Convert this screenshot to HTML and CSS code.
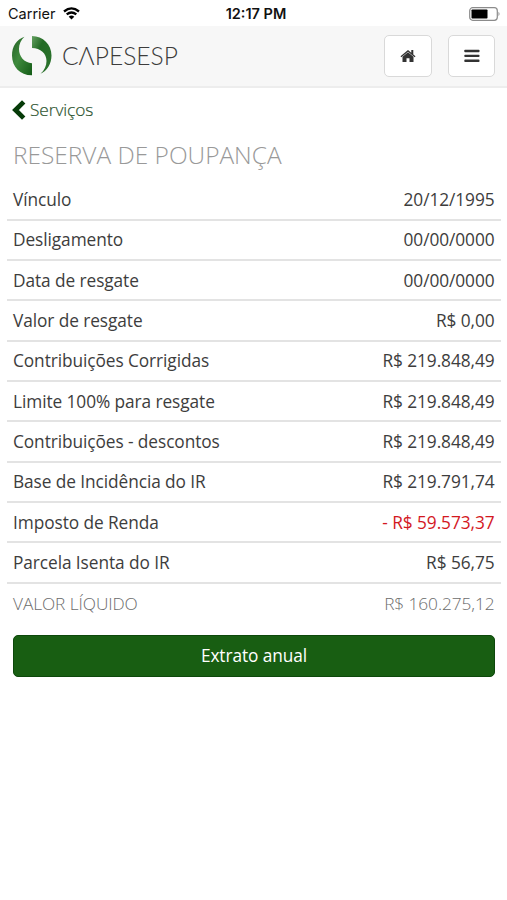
FILE: index.html
```html
<!DOCTYPE html>
<html lang="pt-BR">
<head>
<meta charset="utf-8">
<title>Reserva de Poupança</title>
<link rel="stylesheet" href="styles.css">
</head>
<body>
<div class="status">
  <div class="carrier"><span>Carrier</span>
    <svg class="wifi" width="17" height="13" viewBox="0 0 17 13" fill="none" stroke="#000" stroke-width="2.3"><path d="M1 4.5Q8.500-1.700 16 4.500M3.700 7.400Q8.500 3.500 13.300 7.400"/><path d="M8.500 12.500L5.700 9.700Q8.500 7.500 11.300 9.700Z" fill="#000" stroke="none"/></svg>
  </div>
  <div class="time">12:17 PM</div>
  <svg class="battery" width="31" height="14" viewBox="0 0 31 14"><rect x=".7" y=".7" width="27.600" height="12.600" rx="3" fill="#fff" stroke="#8b8b8b" stroke-width="1.200"/><rect x="2.500" y="2.500" width="16" height="9" rx=".8"/><path d="M29.500 4.800Q31.500 7 29.500 9.200Z" fill="#8b8b8b"/></svg>
</div>
<header class="navbar">
  <div class="brand">
    <svg class="mark" width="40" height="40" viewBox="0 0 40 40">
      <defs>
        <linearGradient id="left" x1="0" y1="0" x2="1" y2="1"><stop offset="0" stop-color="#235f25"/><stop offset=".45" stop-color="#3f8a3d"/><stop offset="1" stop-color="#135b16"/></linearGradient>
        <linearGradient id="right" x1="0" y1="0" x2="1" y2="1"><stop offset="0" stop-color="#65a061"/><stop offset=".35" stop-color="#236b25"/><stop offset="1" stop-color="#2d732e"/></linearGradient>
      </defs>
      <path d="M12.500.8C4.500 3.500 0 10.500 0 19.500C0 31 8.500 39.500 20 39.300V27.200C12 26.500 7 20.500 7 13C7 8 9 4 12.500.8Z" fill="url(#left)"/>
      <path d="M20 0C31 .2 39.500 8.500 39.500 19.500C39.500 28 35 35 28.500 37.800C32.500 34 34.500 30 34.500 25C34.500 17 28.500 12.500 20 12Z" fill="url(#right)"/>
    </svg>
    <svg class="wordmark" width="122" height="34" viewBox="0 0 122 34"><text x="0" y="26" textLength="116" lengthAdjust="spacingAndGlyphs">CΛPESESP</text></svg>
  </div>
  <div class="actions">
    <button class="nav-btn home" aria-label="Início"><svg width="16" height="14" viewBox="0 0 16 14" fill="#333"><path d="M8 1L.5 7.300L1.300 8.300L8 2.700L14.700 8.300L15.500 7.300L13.300 5.400V1H11.300V3.700Z"/><path d="M8 3.200L2.500 7.800V13H6.500V9.300H9.500V13H13.500V7.800Z"/></svg></button>
    <button class="nav-btn menu" aria-label="Menu"><svg width="16" height="14" viewBox="0 0 16 14" fill="#333"><rect y=".8" x=".3" width="15.200" height="2.400" rx=".8"/><rect y="5.700" x=".3" width="15.200" height="2.400" rx=".8"/><rect y="10.600" x=".3" width="15.200" height="2.400" rx=".8"/></svg></button>
  </div>
</header>
<main>
  <a class="back"><svg width="15" height="20" viewBox="0 0 15 20" fill="none" stroke="#063b08" stroke-width="4.800"><path d="M11.700 1.900L3.500 10L11.700 18.100"/></svg><span>Serviços</span></a>
  <h1>RESERVA DE POUPANÇA</h1>
  <div class="list">
    <div class="row"><span>Vínculo</span><span>20/12/1995</span></div>
    <div class="row"><span>Desligamento</span><span>00/00/0000</span></div>
    <div class="row"><span>Data de resgate</span><span>00/00/0000</span></div>
    <div class="row"><span>Valor de resgate</span><span>R$ 0,00</span></div>
    <div class="row"><span>Contribuições Corrigidas</span><span>R$ 219.848,49</span></div>
    <div class="row"><span>Limite 100% para resgate</span><span>R$ 219.848,49</span></div>
    <div class="row"><span>Contribuições - descontos</span><span>R$ 219.848,49</span></div>
    <div class="row"><span>Base de Incidência do IR</span><span>R$ 219.791,74</span></div>
    <div class="row"><span>Imposto de Renda</span><span class="negative">- R$ 59.573,37</span></div>
    <div class="row"><span>Parcela Isenta do IR</span><span>R$ 56,75</span></div>
    <div class="row total"><span>VALOR LÍQUIDO</span><span>R$ 160.275,12</span></div>
  </div>
  <button class="primary">Extrato anual</button>
</main>
</body>
</html>
```
FILE: styles.css
```css
* { box-sizing: border-box; }
body { margin: 0; background: #fff; color: #3d3d3d; font-family: "Open Sans", sans-serif; font-size: 17.3px; letter-spacing: -.08px; }
.status { height: 26px; display: grid; grid-template-columns: 1fr auto 1fr; align-items: center; padding: 1px 7px 0 8px; font: 14.5px Inter, sans-serif; letter-spacing: 0; color: #111; }
.carrier { display: flex; align-items: center; gap: 7px; }
.time { font-weight: 600; padding-left: 4px; }
.battery { justify-self: end; }
.navbar { height: 62px; display: flex; justify-content: space-between; align-items: center; padding: 1px 12px 1px 11.6px; background: #f7f7f7; border-bottom: 2px solid #ededed; }
.brand { display: flex; align-items: center; gap: 10px; letter-spacing: 0; }
.wordmark text { font: 300 26px Lato, sans-serif; fill: #3c3c3c; }
.actions { display: flex; gap: 16px; }
.nav-btn { height: 42px; width: 48px; padding: 0; border: 1.5px solid #d9d9d9; border-radius: 5px; background: #fff; display: flex; align-items: center; justify-content: center; }
.menu { width: 47px; }
main { padding: 0 6px 0 7px; }
.back { display: flex; align-items: center; gap: 3px; height: 43px; padding-left: 5px; font-weight: 300; color: #2e5530; }
.back span { -webkit-text-stroke: .2px currentColor; }
h1 { margin: 0; height: 49.5px; padding: 7px 6px 0; font-size: 24.45px; line-height: 33px; font-weight: 300; letter-spacing: 0; color: #999; }
.row { display: flex; justify-content: space-between; align-items: center; height: 40.33px; padding: 0 6.5px 0 6px; border-bottom: 2px solid #e3e3e3; white-space: nowrap; }
.total { border-bottom: 0; height: 39px; color: #6c6c6c; font-weight: 300; }
.negative { color: #d3191f; }
.primary { display: block; width: calc(100% - 12px); height: 42px; margin: 12px 6px 0; padding: 0; border: 1px solid #0d480b; border-radius: 5px; background: #185e12; color: #fff; font: inherit; letter-spacing: inherit; }
```
